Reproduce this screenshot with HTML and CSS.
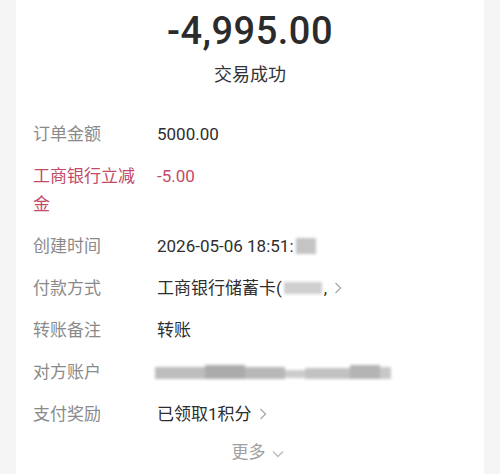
FILE: index.html
```html
<!DOCTYPE html>
<html lang="zh">
<head>
<meta charset="utf-8">
<link rel="stylesheet" href="styles.css">
</head>
<body>
<div class="card">
  <div class="header">
    <div class="amount">-4,995.00</div>
    <div class="status">交易成功</div>
  </div>
  <div class="rows">
    <div class="row"><div class="label">订单金额</div><div class="value">5000.00</div></div>
    <div class="row red"><div class="label">工商银行立减金</div><div class="value">-5.00</div></div>
    <div class="row"><div class="label">创建时间</div><div class="value">2026-05-06 18:51:<span class="blur b-time"></span></div></div>
    <div class="row"><div class="label">付款方式</div><div class="value">工商银行储蓄卡(<span class="blur b-card"></span>,<svg class="chev" viewBox="0 0 8 14" width="8" height="14"><path d="M1.5 2 L6.5 7 L1.5 12" fill="none" stroke="#aaa" stroke-width="1.3"/></svg></div></div>
    <div class="row"><div class="label">转账备注</div><div class="value">转账</div></div>
    <div class="row"><div class="label">对方账户</div><div class="value"><span class="blur b-acct"><i class="s1"></i><i class="s2"></i><i class="s3"></i><i class="s4"></i><i class="s5"></i><i class="s6"></i><i class="s7"></i></span></div></div>
    <div class="row"><div class="label">支付奖励</div><div class="value">已领取1积分<svg class="chev" viewBox="0 0 8 14" width="8" height="14"><path d="M1.5 2 L6.5 7 L1.5 12" fill="none" stroke="#aaa" stroke-width="1.3"/></svg></div></div>
  </div>
  <div class="more">更多<svg class="down" viewBox="0 0 14 8" width="14" height="8"><path d="M2 1.5 L7 6.5 L12 1.5" fill="none" stroke="#bbb" stroke-width="1.3"/></svg></div>
</div>
</body>
</html>
```
FILE: styles.css
```css
html, body {
  margin: 0;
  padding: 0;
  background: #f5f5f5;
  font-family: Roboto, "Noto Sans CJK SC", sans-serif;
  height: 474px;
  overflow: hidden;
}
.card {
  margin: 0 16px;
  background: #fff;
  height: 474px;
  padding: 6px 17px 0;
  box-sizing: border-box;
}
.header {
  text-align: center;
}
.amount {
  font-size: 38px;
  font-weight: 500;
  line-height: 50px;
  color: #2b2b2b;
  letter-spacing: 0.5px;
}
.status {
  margin-top: 6px;
  font-size: 18px;
  line-height: 26px;
  color: #333;
}
.rows {
  margin-top: 25px;
}
.row {
  display: flex;
  padding: 7px 0;
  font-size: 17px;
  line-height: 28px;
}
.label {
  width: 108px;
  margin-right: 16px;
  color: #8a8a8a;
  flex-shrink: 0;
}
.value {
  color: #2e2e2e;
  display: flex;
  align-items: center;
  white-space: nowrap;
  height: 28px;
}
.red .label, .red .value {
  color: #c44a68;
}
.chev {
  margin-left: 7px;
}
.blur {
  display: inline-block;
  filter: blur(1.6px);
}
.b-time {
  width: 20px;
  height: 16px;
  background: #c4c4c4;
  margin-left: 2px;
}
.b-card {
  width: 38px;
  height: 12px;
  background: #cfcfcf;
  margin: 0 2px;
}
.b-acct {
  position: relative;
  width: 236px;
  height: 20px;
  margin-left: -2px;
}
.b-acct i {
  position: absolute;
}
.b-acct .s1 { left: 0; top: 5px; width: 50px; height: 12px; background: #bdbdbd; }
.b-acct .s2 { left: 50px; top: 3px; width: 40px; height: 14px; background: #ababab; }
.b-acct .s3 { left: 90px; top: 5px; width: 40px; height: 12px; background: #b8b8b8; }
.b-acct .s4 { left: 130px; top: 8px; width: 20px; height: 8px; background: #cccccc; }
.b-acct .s5 { left: 150px; top: 6px; width: 45px; height: 11px; background: #c2c2c2; }
.b-acct .s6 { left: 195px; top: 3px; width: 30px; height: 14px; background: #b4b4b4; }
.b-acct .s7 { left: 225px; top: 5px; width: 11px; height: 12px; background: #c8c8c8; }
.more {
  display: flex;
  justify-content: center;
  align-items: center;
  font-size: 17px;
  line-height: 34px;
  color: #a0a0a0;
  padding-left: 16px;
}
.down {
  margin-left: 5px;
  margin-top: 4px;
}
```
